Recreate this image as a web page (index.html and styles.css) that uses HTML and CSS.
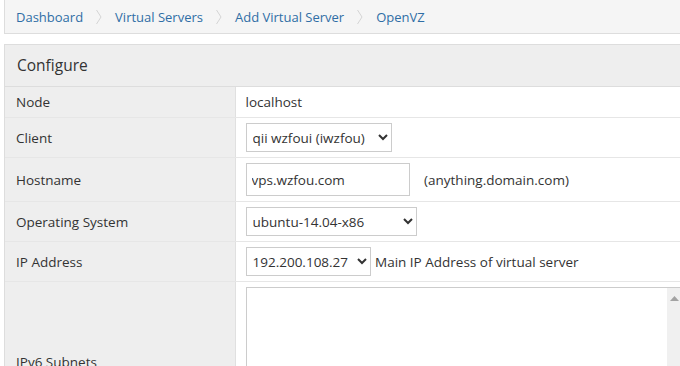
FILE: index.html
```html
<!DOCTYPE html>
<html lang="en">
<head>
    <meta charset="UTF-8">
    <title>Add Virtual Server - OpenVZ</title>
    <link rel="stylesheet" href="styles.css">
</head>
<body>
    <div class="page">
        <ul class="breadcrumb">
            <li><a href="#">Dashboard</a></li>
            <li class="sep"><svg width="6" height="16" viewBox="0 0 6 16"><path d="M0.5 1 L5 8 L0.5 15" fill="none" stroke="#d4d4d4" stroke-width="1"/></svg></li>
            <li><a href="#">Virtual Servers</a></li>
            <li class="sep"><svg width="6" height="16" viewBox="0 0 6 16"><path d="M0.5 1 L5 8 L0.5 15" fill="none" stroke="#d4d4d4" stroke-width="1"/></svg></li>
            <li><a href="#">Add Virtual Server</a></li>
            <li class="sep"><svg width="6" height="16" viewBox="0 0 6 16"><path d="M0.5 1 L5 8 L0.5 15" fill="none" stroke="#d4d4d4" stroke-width="1"/></svg></li>
            <li><a href="#">OpenVZ</a></li>
        </ul>

        <div class="panel">
            <div class="panel-heading">Configure</div>
            <table class="form-table">
                <tr>
                    <td class="label">Node</td>
                    <td class="value">localhost</td>
                </tr>
                <tr>
                    <td class="label">Client</td>
                    <td class="value">
                        <select class="field client-select">
                            <option>qii wzfoui (iwzfou)</option>
                        </select>
                    </td>
                </tr>
                <tr>
                    <td class="label">Hostname</td>
                    <td class="value">
                        <input class="field host-input" type="text" value="vps.wzfou.com">
                        <span class="hint">(anything.domain.com)</span>
                    </td>
                </tr>
                <tr>
                    <td class="label">Operating System</td>
                    <td class="value">
                        <select class="field os-select">
                            <option>ubuntu-14.04-x86</option>
                        </select>
                    </td>
                </tr>
                <tr>
                    <td class="label">IP Address</td>
                    <td class="value">
                        <select class="field ip-select">
                            <option>192.200.108.27</option>
                        </select>
                        <span class="note">Main IP Address of virtual server</span>
                    </td>
                </tr>
                <tr>
                    <td class="label">IPv6 Subnets</td>
                    <td class="value">
                        <div class="subnets-wrap">
                            <textarea class="field subnets"></textarea>
                            <div class="scrollbar">
                                <svg width="9" height="5" viewBox="0 0 9 5"><path d="M0 5 L4.5 0 L9 5 Z" fill="#a3a3a3"/></svg>
                            </div>
                        </div>
                    </td>
                </tr>
            </table>
        </div>
    </div>
</body>
</html>
```

FILE: styles.css
```css
* {
    margin: 0;
    padding: 0;
    box-sizing: border-box;
}

body {
    font-family: "Segoe UI", "Open Sans", "Noto Sans", sans-serif;
    font-size: 13px;
    color: #333;
    background: #fff;
    overflow: hidden;
}

.page {
    width: 720px;
    padding-left: 4px;
}

.breadcrumb {
    list-style: none;
    display: flex;
    align-items: center;
    height: 34px;
    padding: 0 11px;
    background: #f5f5f5;
    border-left: 1px solid #ddd;
    border-bottom: 1px solid #ddd;
}

.breadcrumb li {
    line-height: 20px;
}

.breadcrumb a {
    color: #2f6ea5;
    text-decoration: none;
    font-size: 13px;
}

.breadcrumb .sep {
    display: flex;
    align-items: center;
    margin: 0 13px 0 13px;
}

.panel {
    margin-top: 10px;
    border: 1px solid #ddd;
}

.panel-heading {
    height: 42px;
    padding: 0 12px;
    line-height: 41px;
    font-size: 15.5px;
    background: #eee;
    border-bottom: 1px solid #ddd;
    color: #333;
}

.form-table {
    width: 100%;
    border-collapse: collapse;
}

.form-table td {
    border-bottom: 1px solid #e6e6e6;
    padding: 5px 10px;
    line-height: 20px;
    vertical-align: middle;
}

.form-table .label {
    width: 230px;
    padding-left: 11px;
    background: #eee;
    border-right: 1px solid #e0e0e0;
    font-size: 13.5px;
}

.form-table .value {
    font-size: 13.5px;
}

.field {
    font-family: inherit;
    font-size: 13.5px;
    color: #333;
    background: #fff;
    border: 1px solid #ccc;
    border-radius: 0;
    vertical-align: middle;
}

select.field {
    height: 29px;
    padding: 0 2px;
}

.client-select {
    width: 146px;
}

.os-select {
    width: 171px;
}

.ip-select {
    width: 125px;
}

.host-input {
    width: 164px;
    height: 33px;
    padding: 0 5px;
    outline: none;
}

.hint {
    margin-left: 11px;
    vertical-align: middle;
}

.note {
    margin-left: 1px;
    vertical-align: middle;
}

.subnets-wrap {
    position: relative;
    width: 437px;
}

.subnets {
    display: block;
    width: 437px;
    height: 150px;
    resize: none;
    outline: none;
}

.scrollbar {
    position: absolute;
    top: 1px;
    right: 1px;
    bottom: 1px;
    width: 15px;
    background: #f0f0f0;
    display: flex;
    justify-content: center;
    padding-top: 8px;
}
```
